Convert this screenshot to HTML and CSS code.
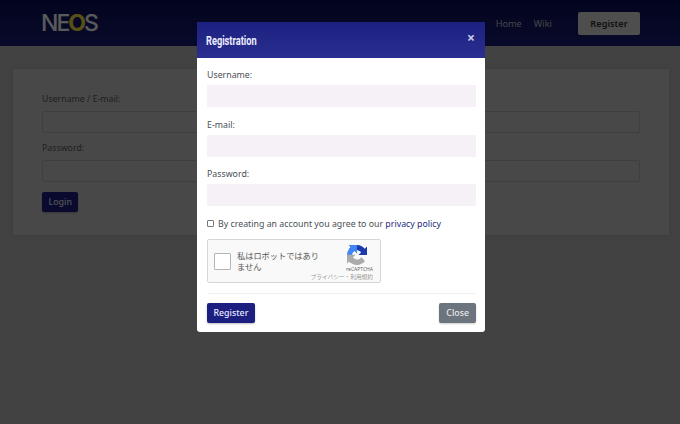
FILE: index.html

```html
<!DOCTYPE html>
<html lang="en">
<head>
  <meta charset="UTF-8">
  <meta name="viewport" content="width=device-width, initial-scale=1">
  <title>NEOS Login</title>
  <link rel="stylesheet" href="styles.css">
</head>
<body>
  <header class="navbar">
    <a class="logo">NE<span class="logo-o">O</span>S</a>
    <nav class="nav-links">
      <a>Home</a>
      <a>Wiki</a>
      <button class="btn btn-light">Register</button>
    </nav>
  </header>
  <main class="page">
    <section class="card">
      <label class="field-label">Username / E-mail:</label>
      <input class="page-input" type="text">
      <label class="field-label">Password:</label>
      <input class="page-input" type="password">
      <button class="btn btn-primary">Login</button>
    </section>
  </main>

  <div class="backdrop">
    <div class="modal">
      <div class="modal-header">
        <h5 class="modal-title">Registration</h5>
        <span class="modal-x">&times;</span>
      </div>
      <div class="modal-body">
        <label class="field-label">Username:</label>
        <input class="modal-input" type="text">
        <label class="field-label">E-mail:</label>
        <input class="modal-input" type="text">
        <label class="field-label">Password:</label>
        <input class="modal-input" type="password">
        <div class="agree">
          <input type="checkbox">
          <span>By creating an account you agree to our <a>privacy policy</a></span>
        </div>
        <div class="captcha">
          <span class="captcha-box"></span>
          <span class="captcha-text">私はロボットではありません</span>
          <div class="captcha-brand">
            <svg width="20" height="20" viewBox="0 0 64 64">
              <path d="M64 31.955l-.033-1.37V4.687l-7.16 7.16C50.948 4.674 42.033.093 32.05.093c-10.4 0-19.622 4.96-25.458 12.64l11.736 11.86a15.55 15.55 0 0 1 4.754-5.334c2.05-1.6 4.952-2.906 8.968-2.906.485 0 .86.057 1.135.163 4.976.393 9.288 3.14 11.828 7.124l-8.307 8.307c10.522-.04 22.4-.066 27.295.004" fill="#1c3aa9"/>
              <path d="M31.95.002l-1.37.033H4.687l7.16 7.16C4.674 13.056.093 21.97.093 31.954c0 10.4 4.96 19.622 12.64 25.458l11.86-11.736a15.55 15.55 0 0 1-5.334-4.754c-1.6-2.05-2.906-4.952-2.906-8.968 0-.485.057-.86.163-1.135.393-4.976 3.14-9.288 7.124-11.828l8.307 8.307c-.04-10.522-.066-22.4.004-27.295" fill="#4285f4"/>
              <path d="M.002 31.953l.033 1.37v25.9l7.16-7.16c5.86 7.173 14.774 11.754 24.76 11.754 10.4 0 19.622-4.96 25.458-12.64L45.677 38.44a15.55 15.55 0 0 1-4.754 5.334c-2.05 1.6-4.952 2.906-8.968 2.906-.485 0-.86-.057-1.135-.163-4.976-.393-9.288-3.14-11.828-7.124l8.307-8.307c-10.522.04-22.4.066-27.295-.004" fill="#ababab"/>
            </svg>
            <span class="captcha-name">reCAPTCHA</span>
            <span class="captcha-terms">プライバシー・利用規約</span>
          </div>
        </div>
      </div>
      <div class="modal-footer">
        <button class="btn btn-primary">Register</button>
        <button class="btn btn-grey">Close</button>
      </div>
    </div>
  </div>
</body>
</html>
```

FILE: styles.css

```css
* { margin: 0; padding: 0; box-sizing: border-box; }
html, body {
  height: 100%;
  overflow: hidden;
}
body {
  font-family: "Noto Sans", "Noto Sans CJK JP", sans-serif;
  font-size: 8.8px;
  color: #5c5c5c;
  background: #bcbcbc;
}

/* Navbar */
.navbar {
  height: 46px;
  display: flex;
  align-items: center;
  justify-content: space-between;
  padding: 0 40px 0 41px;
  background: linear-gradient(#0a0e56, #181d78);
}
.logo {
  font-family: "Inter", "Liberation Sans", sans-serif;
  font-size: 23px;
  font-weight: 500;
  letter-spacing: -2px;
  color: #ffffff;
}
.logo-o { color: #ffe640; font-weight: 700; }
.nav-links {
  display: flex;
  align-items: center;
  font-size: 9.2px;
  color: #c4c6d8;
}
.nav-links a { margin-left: 12px; }
.nav-links .btn { margin-left: 26px; }

/* Buttons */
.btn {
  font-family: inherit;
  font-size: 8.8px;
  font-weight: 500;
  height: 20px;
  padding: 0 6.5px;
  border: 0;
  border-radius: 2px;
}
.btn-primary {
  color: #e8e9ff;
  background: #1b1f80;
  box-shadow: 0 1px 2px rgba(0,0,0,0.25);
}
.btn-grey {
  padding: 0 7px;
  color: #e6e8ea;
  background: #6c757d;
  box-shadow: 0 1px 2px rgba(0,0,0,0.2);
}
.btn-light {
  height: 23px;
  width: 62px;
  font-size: 9.2px;
  color: #333;
  background: #e0e0e0;
  font-weight: 600;
}

/* Login card */
.page { padding: 23px 11px 0 13px; }
.card {
  height: 166px;
  padding: 23px 29px;
  background: #cfcfcf;
  box-shadow: 0 0 6px rgba(0,0,0,0.08);
}
.field-label { display: block; line-height: 14px; }
.page-input {
  display: block;
  width: 100%;
  height: 22px;
  margin: 5px 0 8px;
  border: 1px solid #b4b4b4;
  border-radius: 2px;
  background: #cfcfcf;
}
.card .btn { margin-top: 2px; }

/* Modal */
.backdrop {
  position: fixed;
  inset: 0;
  display: flex;
  justify-content: center;
  background: rgba(0,0,0,0.65);
}
.modal {
  width: 288px;
  height: 310px;
  margin: 22px 0 0 2px;
  background: #fff;
  border-radius: 0 0 3px 3px;
  overflow: hidden;
}
.modal-header {
  height: 36px;
  display: flex;
  align-items: center;
  justify-content: space-between;
  padding: 0 10px 0 9px;
  background: linear-gradient(#1c2080, #2a2f90);
  color: #eceeff;
}
.modal-title {
  font-family: "Roboto", sans-serif;
  font-size: 13px;
  font-weight: 700;
  transform: scaleX(0.71);
  transform-origin: left;
}
.modal-x { font-size: 14px; font-weight: 700; color: #c9cbe8; margin-top: -5px; }
.modal-body { padding: 10px 9px 0 10px; }
.modal-body .field-label { color: #4a4f55; }
.modal-input {
  display: block;
  width: 100%;
  height: 22px;
  margin: 3px 0 10.5px;
  border: 0;
  background: #f5f1f6;
}
.agree {
  display: flex;
  align-items: center;
  gap: 4px;
  height: 14px;
  color: #4a4f55;
}
.agree input {
  appearance: none;
  width: 7px;
  height: 7px;
  border: 1px solid #777;
  border-radius: 1px;
  background: #fff;
}
.agree a { color: #1b1f80; }

/* reCAPTCHA */
.captcha {
  width: 174px;
  height: 44px;
  margin-top: 8.5px;
  display: flex;
  align-items: center;
  background: #f9f9f9;
  border: 1px solid #d6d6d6;
  border-radius: 2px;
}
.captcha-box {
  width: 17px;
  height: 17px;
  margin-left: 6px;
  background: #fff;
  border: 1px solid #b5b5b5;
  border-radius: 1px;
}
.captcha-text {
  flex: none;
  width: 84px;
  margin-left: 6px;
  font-size: 8.2px;
  line-height: 11px;
  color: #555;
}
.captcha-brand {
  flex: 1;
  min-width: 0;
  align-self: flex-start;
  padding-top: 5px;
  display: flex;
  flex-direction: column;
  align-items: flex-end;
}
.captcha-brand svg { margin-right: 13px; }
.captcha-name { font-size: 5px; line-height: 8px; color: #666; margin-right: 7px; }
.captcha-terms { font-size: 5.7px; line-height: 8px; color: #999; margin-right: 7px; white-space: nowrap; }

.modal-footer {
  margin: 10px 9px 0 10px;
  padding-top: 9px;
  border-top: 1px solid #f0f0f0;
  display: flex;
  justify-content: space-between;
}
```
